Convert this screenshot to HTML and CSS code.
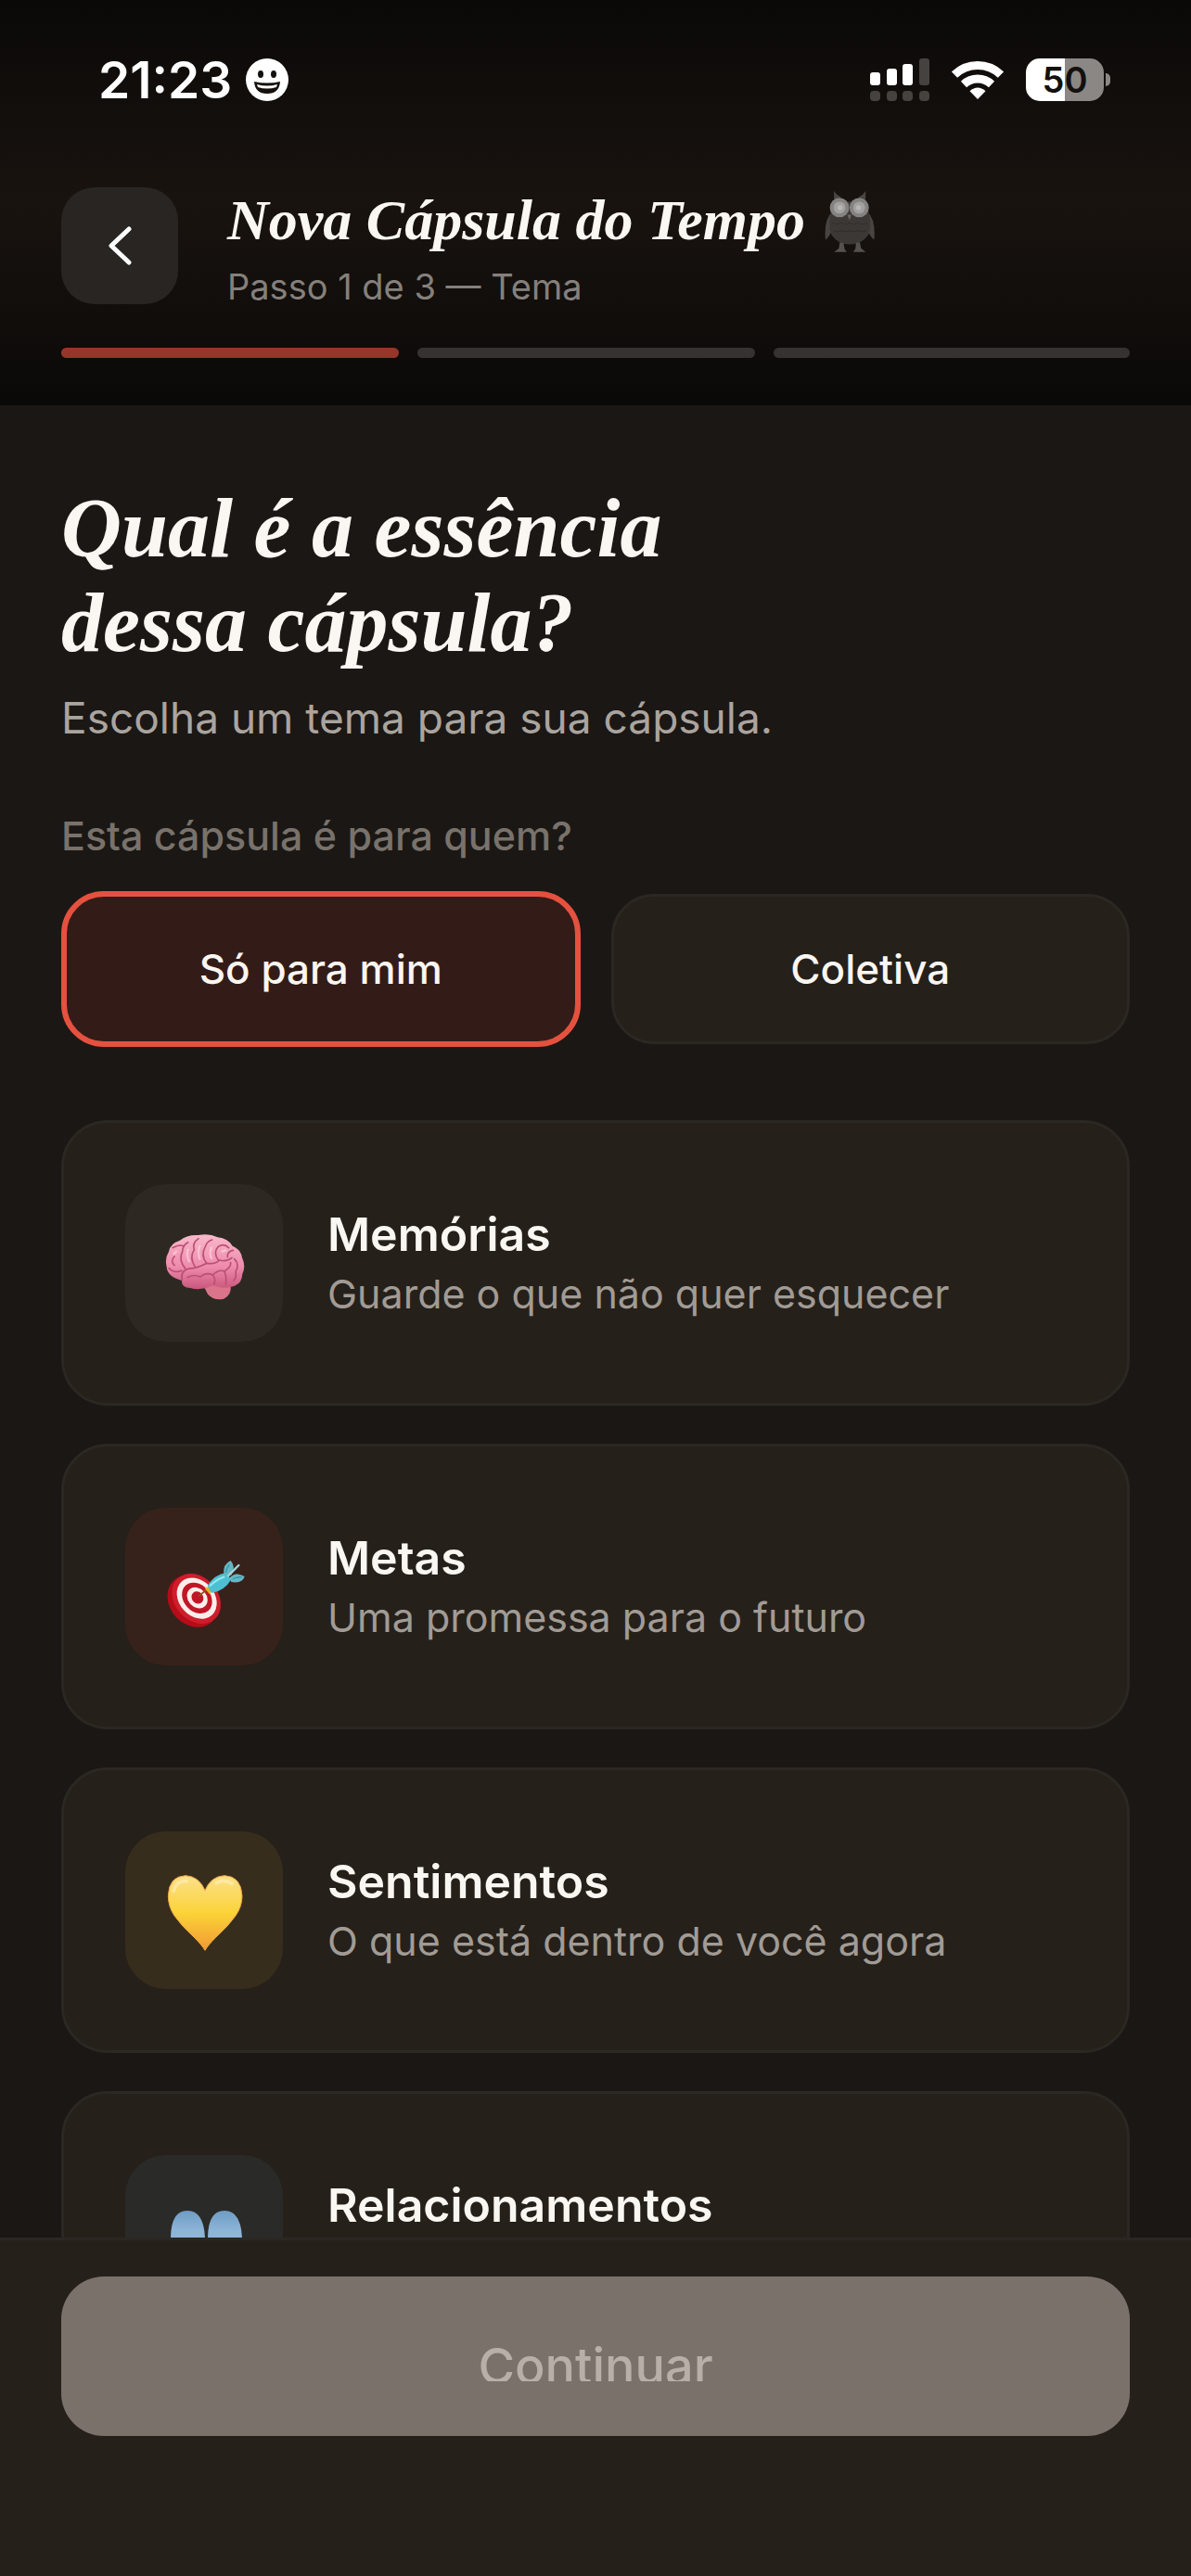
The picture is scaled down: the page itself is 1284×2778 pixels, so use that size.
FILE: index.html
```html
<!DOCTYPE html>
<html lang="pt-BR">

<head>
    <meta charset="UTF-8">
    <meta name="viewport" content="width=device-width, initial-scale=1.0">
    <title>Nova Cápsula do Tempo</title>
    <link rel="stylesheet" href="styles.css">
</head>

<body>
    <div class="app">
        <header class="header">
            <div class="status">
                <div class="status_left">
                    <span class="time">21:23</span>
                    <svg class="smile" viewBox="0 0 46 46">
                        <circle cx="23" cy="23" r="23" fill="#fff" />
                        <ellipse cx="16" cy="17" rx="3" ry="4" fill="#14100d" />
                        <ellipse cx="30" cy="17" rx="3" ry="4" fill="#14100d" />
                        <path d="M9 25q14 3 28 0q-1 13-14 13T9 25z" fill="#14100d" />
                        <path d="M12 28q11 3 22 0l-1 3q-10 3-20 0z" fill="#fff" />
                    </svg>
                </div>
                <div class="status_right">
                    <svg class="signal" viewBox="0 0 64 46">
                        <g fill="#fff">
                            <rect x="0" y="15" width="11" height="14" rx="3" />
                            <rect x="18" y="11" width="11" height="18" rx="3" />
                            <rect x="35" y="6" width="11" height="23" rx="3" />
                        </g>
                        <g fill="#454240">
                            <rect x="53" y="0" width="11" height="29" rx="3" />
                            <rect x="0" y="35" width="11" height="11" rx="4" />
                            <rect x="18" y="35" width="11" height="11" rx="4" />
                            <rect x="35" y="35" width="11" height="11" rx="4" />
                            <rect x="53" y="35" width="11" height="11" rx="4" />
                        </g>
                    </svg>
                    <svg class="wifi" viewBox="0 0 56 42">
                        <g fill="none" stroke="#fff" stroke-width="9">
                            <path d="M3 15.500A36 36 0 0 1 53 15.500" />
                            <path d="M13 26A22 22 0 0 1 43 26" />
                        </g>
                        <path d="M28 42l-8.500-8.700q8.500-7.500 17 0z" fill="#fff" />
                    </svg>
                    <div class="battery"><span>50</span></div>
                </div>
            </div>
            <div class="topbar">
                <button class="back" type="button" aria-label="Voltar">
                    <svg viewBox="0 0 26 42">
                        <path d="M23 3L4 21l19 18" fill="none" stroke="#fff" stroke-width="5" stroke-linecap="round" stroke-linejoin="round" />
                    </svg>
                </button>
                <div class="titles">
                    <div class="title">Nova Cápsula do Tempo
                        <svg class="owl" viewBox="85 46 165 208">
                            <path d="M117 58Q124 70 140 78L136 98L118 92zM219 58Q212 70 196 78L200 98L218 92z" fill="#4a4643" />
                            <path d="M112 124Q84 150 90 214Q108 202 118 160zM224 124Q252 150 246 214Q228 202 218 160z" fill="#474441" />
                            <path d="M116 100Q168 82 220 100Q240 150 230 194Q208 230 168 229Q128 230 107 194Q96 150 116 100z" fill="#3b3836" />
                            <path d="M112 160q14 8 28 0q14 8 28 0q14 8 28 0q14 8 28 0M116 184q13 7 26 0q13 7 26 0q13 7 26 0q13 7 26 0" fill="none" stroke="#312e2c" stroke-width="3" />
                            <path d="M136 222l12 2 3 19 7 10h-40l15-12zM188 224l12-2 4 19 15 12h-40l7-10z" fill="#55514f" />
                            <circle cx="135" cy="111" r="31" fill="#858381" />
                            <circle cx="198" cy="111" r="31" fill="#858381" />
                            <circle cx="135" cy="111" r="19" fill="#a3a19f" />
                            <circle cx="198" cy="111" r="19" fill="#a3a19f" />
                            <circle cx="137" cy="111" r="8" fill="#b9b7b5" />
                            <circle cx="196" cy="111" r="8" fill="#b9b7b5" />
                            <path d="M160 134h13l-6 18z" fill="#6a6764" />
                        </svg>
                    </div>
                    <div class="step">Passo 1 de 3 — Tema</div>
                </div>
            </div>
            <div class="progress">
                <span class="current"></span>
                <span></span>
                <span></span>
            </div>
        </header>

        <main class="content">
            <h1>Qual é a essência<br>dessa cápsula?</h1>
            <p class="lead">Escolha um tema para sua cápsula.</p>

            <p class="label" id="quem">Esta cápsula é para quem?</p>
            <div class="choice" role="group" aria-labelledby="quem">
                <button class="current" type="button" aria-pressed="true">Só para mim</button>
                <button type="button" aria-pressed="false">Coletiva</button>
            </div>

            <div class="list">
                <button class="card" type="button">
                    <span class="icon memorias">
                        <svg viewBox="47 50 510 510">
                            <defs>
                                <linearGradient id="brain" x1="0" y1="0" x2="0" y2="1">
                                    <stop offset="0" stop-color="#f8b9cb" />
                                    <stop offset=".6" stop-color="#ee8aac" />
                                    <stop offset="1" stop-color="#c9567c" />
                                </linearGradient>
                            </defs>
                            <path d="M302 382Q340 366 388 378Q392 408 366 421Q334 428 314 406z" fill="#d9748a" />
                            <path d="M230 362Q183 350 181 318Q174 290 188 268Q192 242 224 232Q246 213 284 215Q318 208 346 222Q380 226 394 250Q422 262 425 288Q438 316 426 340Q424 376 390 382Q360 390 330 378Q290 396 258 386Q228 384 230 362z" fill="url(#brain)" />
                            <g fill="none" stroke="#bb4f75" stroke-width="5" stroke-linecap="round">
                                <path d="M231 360Q224 334 250 324Q284 322 310 306Q338 310 352 296Q376 302 392 288" />
                                <path d="M188 322Q206 340 230 330M242 324Q218 296 232 268Q232 248 250 238" />
                                <path d="M272 316Q254 288 270 262Q262 242 284 226M310 306Q290 280 306 252Q312 234 328 230" />
                                <path d="M200 256Q220 244 236 250M348 296Q330 270 348 252Q366 240 382 256M378 286Q376 268 396 264" />
                                <path d="M248 352Q270 340 290 350Q308 334 330 344Q350 324 368 332Q390 318 388 304" />
                                <path d="M368 332Q376 350 372 374M400 292Q418 310 404 334Q408 352 398 362M330 344Q342 356 334 374M206 284Q192 300 206 312" />
                            </g>
                            <g fill="none" stroke="#ffd9e3" stroke-width="7" stroke-linecap="round" opacity=".6">
                                <path d="M250 262Q244 280 254 300M288 250Q280 270 288 292M326 256Q318 274 326 290M360 268l12-4M212 268l-8 8" />
                            </g>
                        </svg>
                    </span>
                    <span class="text">
                        <strong>Memórias</strong>
                        <small>Guarde o que não quer esquecer</small>
                    </span>
                </button>

                <button class="card" type="button">
                    <span class="icon metas">
                        <svg viewBox="47 48 510 510">
                            <ellipse cx="266" cy="350" rx="91" ry="75" transform="rotate(48 266 350)" fill="#b50d18" />
                            <g transform="rotate(48 277 342)">
                                <ellipse cx="277" cy="342" rx="89" ry="70" fill="#cf1d2b" />
                                <ellipse cx="277" cy="340" rx="73" ry="57" fill="#fbeeea" />
                                <ellipse cx="277" cy="339" rx="55" ry="43" fill="#c01727" />
                                <ellipse cx="277" cy="338" rx="37" ry="30" fill="#fbeeea" />
                                <ellipse cx="277" cy="337" rx="21" ry="18" fill="#c01727" />
                            </g>
                            <path d="M284 334l28-22" stroke="#7d5a1c" stroke-width="5" />
                            <path d="M304 308l12-4 10 12-6 12z" fill="#e2b51f" />
                            <path d="M313 300Q336 264 372 258L390 280Q368 318 326 324z" fill="#4cbfd2" />
                            <path d="M322 300Q342 280 366 272" fill="none" stroke="#92e4ee" stroke-width="7" stroke-linecap="round" />
                            <path d="M366 264Q362 230 388 219Q406 238 390 266z" fill="#65b7c2" />
                            <path d="M384 276Q402 252 433 270Q426 294 390 288z" fill="#65b7c2" />
                            <path d="M380 268l34-34" stroke="#a5d4d9" stroke-width="7" stroke-linecap="round" />
                            <path d="M372 258q2-14 12-26M396 278q14-6 28-6" fill="none" stroke="#3395a7" stroke-width="4" />
                        </svg>
                    </span>
                    <span class="text">
                        <strong>Metas</strong>
                        <small>Uma promessa para o futuro</small>
                    </span>
                </button>

                <button class="card" type="button">
                    <span class="icon sentimentos">
                        <svg viewBox="47 45 510 510">
                            <defs>
                                <linearGradient id="heart" x1="0" y1="0" x2="0" y2="1">
                                    <stop offset="0" stop-color="#fce08a" />
                                    <stop offset=".5" stop-color="#fcd338" />
                                    <stop offset="1" stop-color="#f09a32" />
                                </linearGradient>
                            </defs>
                            <path d="M305 430Q296 414 270 388Q230 352 206 318Q186 288 186 254Q188 190 242 188Q286 190 305 236Q324 190 368 188Q422 190 425 254Q425 288 404 318Q380 352 340 388Q314 414 305 430z" fill="url(#heart)" stroke="#efa645" stroke-width="3" />
                            <path d="M204 238Q212 204 246 206M342 212Q368 198 392 214" fill="none" stroke="#fff0bd" stroke-width="11" stroke-linecap="round" opacity=".6" />
                        </svg>
                    </span>
                    <span class="text">
                        <strong>Sentimentos</strong>
                        <small>O que está dentro de você agora</small>
                    </span>
                </button>

                <button class="card" type="button">
                    <span class="icon relacionamentos">
                        <svg viewBox="0 0 170 170">
                            <defs>
                                <linearGradient id="people" x1="0" y1="0" x2="0" y2="1">
                                    <stop offset="0" stop-color="#6f9cc4" />
                                    <stop offset=".5" stop-color="#8db5d8" />
                                </linearGradient>
                            </defs>
                            <path d="M49 90Q49 60 67 60T86 90Q86 104 67 104T49 90zM89 90Q89 60 107 60T126 90Q126 104 107 104T89 90z" fill="url(#people)" />
                        </svg>
                    </span>
                    <span class="text">
                        <strong>Relacionamentos</strong>
                    </span>
                </button>
            </div>
        </main>

        <footer class="footer">
            <button class="continue" type="button" disabled><span>Continuar</span></button>
        </footer>
    </div>
</body>

</html>
```

FILE: styles.css
```css
* {
    margin: 0;
    padding: 0;
    box-sizing: border-box;
}

body {
    background-color: #1b1714;
    color: #faf6f2;
    font-family: Inter, "Liberation Sans", sans-serif;
}

button {
    border: none;
    color: inherit;
    font-family: inherit;
    cursor: pointer;
}

svg {
    display: block;
}

.app {
    display: flex;
    flex-direction: column;
    height: 100vh;
}

/* header */
.header {
    flex: none;
    padding: 0 66px 51px;
    background: linear-gradient(#0a0908, #19130f 50%, #0a0908);
}

.status {
    display: flex;
    justify-content: space-between;
    align-items: center;
    height: 171px;
    padding: 0 22px 0 40px;
}

.status_left,
.status_right {
    display: flex;
    align-items: center;
}

.time {
    font-size: 55px;
    font-weight: 600;
    color: #fff;
}

.smile {
    width: 46px;
    height: 46px;
    margin-left: 15px;
}

.signal {
    width: 64px;
    height: 46px;
}

.wifi {
    width: 56px;
    height: 42px;
    margin: 0 24px;
}

.battery {
    position: relative;
    width: 84px;
    height: 46px;
    margin-right: 6px;
    border-radius: 15px;
    background: linear-gradient(90deg, #fff 50%, #8a8785 50%);
    color: #14100d;
    font-size: 38px;
    font-weight: 600;
    line-height: 46px;
    text-align: center;
}

.battery::after {
    content: "";
    position: absolute;
    top: 16px;
    right: -7px;
    width: 5px;
    height: 14px;
    border-radius: 0 5px 5px 0;
    background-color: #8a8785;
}

.topbar {
    display: flex;
    align-items: flex-start;
    gap: 53px;
    margin-top: 31px;
}

.back {
    display: flex;
    align-items: center;
    justify-content: center;
    width: 126px;
    height: 126px;
    border-radius: 36px;
    background-color: #292522;
}

.back svg {
    width: 26px;
    height: 42px;
}

.title {
    display: flex;
    align-items: center;
    gap: 20px;
    height: 70px;
    font-family: "Liberation Serif", serif;
    font-size: 62px;
    font-style: italic;
    font-weight: bold;
    line-height: 70px;
}

.owl {
    width: 56px;
    height: 70px;
}

.step {
    margin-top: 6px;
    color: #85807c;
    font-size: 38px;
    line-height: 62px;
}

.progress {
    display: grid;
    grid-template-columns: repeat(3, 1fr);
    margin-top: 35px;
}

.progress span {
    height: 11px;
    margin-right: 20px;
    border-radius: 6px;
    background-color: #36322f;
}

.progress span:last-child {
    margin-right: 0;
}

.progress .current {
    background-color: #97352b;
}

/* content */
.content {
    flex: 1;
    min-height: 0;
    overflow: hidden;
    padding: 82px 66px 0;
}

h1 {
    font-family: "Liberation Serif", serif;
    font-size: 90px;
    font-style: italic;
    font-weight: bold;
    line-height: 102px;
}

.lead {
    margin-top: 21px;
    color: #aaa49f;
    font-size: 46px;
    line-height: 60px;
}

.label {
    margin-top: 72px;
    color: #78726b;
    font-size: 43px;
    font-weight: 500;
    line-height: 50px;
}

.choice {
    display: grid;
    grid-template-columns: 1fr 1fr;
    align-items: center;
    gap: 33px;
    margin-top: 35px;
}

.choice button {
    height: 162px;
    border: 3px solid #2b2722;
    border-radius: 46px;
    background-color: #25201a;
    font-size: 44px;
    font-weight: 500;
}

.choice .current {
    height: 168px;
    border: 6px solid #e5513f;
    background-color: #331c17;
}

.list {
    display: flex;
    flex-direction: column;
    gap: 41px;
    margin-top: 79px;
}

.card {
    display: flex;
    align-items: center;
    gap: 48px;
    padding: 66px;
    border: 3px solid #2b2722;
    border-radius: 50px;
    background-color: #25201a;
    text-align: left;
}

.icon {
    flex: none;
    width: 170px;
    height: 170px;
    border-radius: 44px;
}

.memorias {
    background-color: #2d2822;
}

.metas {
    background-color: #37221b;
}

.sentimentos {
    background-color: #372d1d;
}

.relacionamentos {
    background-color: #2a2a28;
}

.text {
    min-height: 124px;
}

.text strong {
    display: block;
    font-size: 50px;
    font-weight: 600;
    line-height: 62px;
}

.text small {
    display: block;
    margin-top: 4px;
    color: #a19b95;
    font-size: 43px;
    line-height: 58px;
}

/* footer */
.footer {
    flex: none;
    padding: 39px 66px 151px;
    border-top: 3px solid #2b2724;
    background-color: #25201a;
}

.continue {
    display: flex;
    align-items: flex-start;
    justify-content: center;
    width: 100%;
    height: 172px;
    padding-top: 54px;
    border-radius: 46px;
    background-color: #7b716b;
    color: #b9afa9;
    font-size: 54px;
    font-weight: 500;
    cursor: default;
}

/* the label box is shorter than its line */
.continue span {
    height: 59px;
    line-height: 86px;
    overflow: hidden;
}
```
